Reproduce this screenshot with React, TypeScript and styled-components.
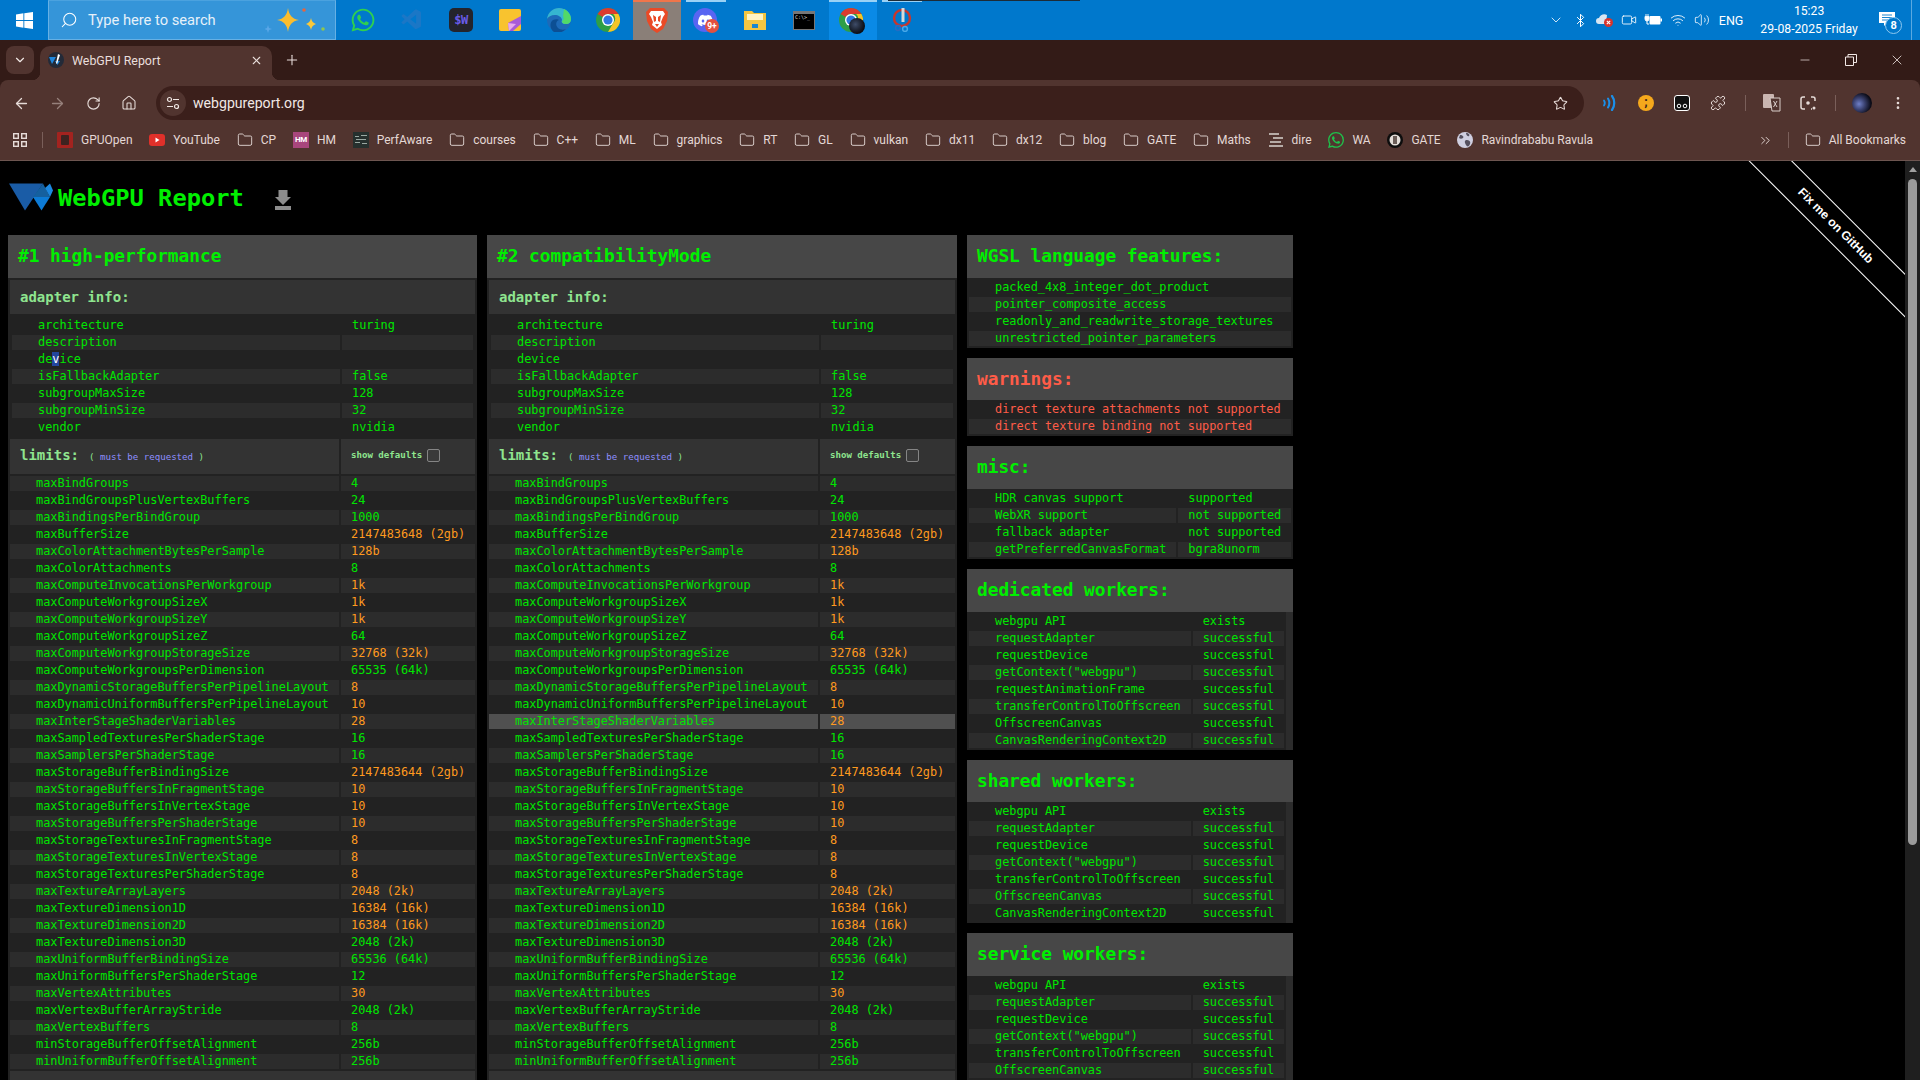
import React from 'react';
import styled, { createGlobalStyle } from 'styled-components';
import {
  ArrowLeft, ArrowRight, Bluetooth, ChevronDown, ChevronsRight, EllipsisVertical, Folder, House,
  Minus, Plus, Puzzle, RotateCw, Search, Star, Video, Volume2, Wifi, X,
} from 'lucide-react';
import { FaWhatsapp } from 'react-icons/fa';
import { SiDiscord, SiWhatsapp } from 'react-icons/si';
import { VscVscode } from 'react-icons/vsc';

const MONO = '"DejaVu Sans Mono", "Liberation Mono", monospace';
const UI = 'Roboto, "Noto Sans", sans-serif';

const Global = createGlobalStyle`
  html, body { margin: 0; padding: 0; background: #000; overflow: hidden; height: 1080px; }
  #root { height: 1080px; }
  * { box-sizing: border-box; }
`;

const Screen = styled.div`
  width: 1920px; height: 1080px; display: flex; flex-direction: column; overflow: hidden; background: #000;
`;

/* ---------- Windows taskbar ---------- */
const Taskbar = styled.div`
  position: relative; height: 40px; flex: none; display: flex; align-items: stretch; background: #0078cc;
  font-family: ${UI}; color: #fff;
`;
const StartButton = styled.div`
  width: 48px; display: flex; align-items: center; justify-content: center;
`;
const SearchBox = styled.div`
  width: 288px; display: flex; align-items: center; padding-left: 11px; background: #3595d9;
  border: 1px solid #66b0e4; border-top-color: #4ba2df; position: relative; color: #e6f1f9; font-size: 14.7px;
  svg.glass { margin-right: 10px; transform: scaleX(-1); }
`;
const Sparkles = styled.svg`
  position: absolute; right: 10px; top: 0;
`;
const TaskIcons = styled.div`
  display: flex; gap: 1px; margin-left: 3px;
`;
const TaskSlot = styled.div<{ $bg?: string; $accent?: string }>`
  position: relative; width: 48px; display: flex; align-items: center; justify-content: center;
  background: ${p => p.$bg || 'transparent'};
  &::before {
    content: ''; position: absolute; left: ${p => (p.$bg ? 0 : 4)}px; right: ${p => (p.$bg ? 0 : 4)}px; top: 0; height: 2px;
    background: ${p => p.$accent || 'transparent'};
  }
`;
const PreviewLine = styled.div`
  position: absolute; left: 888px; top: 0; width: 192px; height: 1px; background: #1d2b36;
`;
const SwBadge = styled.div`
  width: 24px; height: 24px; border-radius: 5px; background: #24242c; color: #6a5ce8;
  font: bold 12px ${MONO}; display: flex; align-items: center; justify-content: center; letter-spacing: -0.5px;
`;
const TermBox = styled.div`
  width: 22px; height: 19px; background: #000; border: 1px solid #777; border-top-width: 3px;
  color: #ddd; font: 5px/7px ${MONO}; padding: 0 1px; overflow: hidden;
`;
const DiscordDisc = styled.div`
  position: relative; width: 24px; height: 24px; border-radius: 50%; background: #5865f2;
  display: flex; align-items: center; justify-content: center; margin-left: -2px;
`;
const CountBadge = styled.div`
  position: absolute; left: 12px; top: 11px; width: 14px; height: 14px; border-radius: 50%; background: #e2503f;
  color: #fff; font: bold 8.5px/14px ${UI}; text-align: center;
`;
const ChromeStack = styled.div`
  position: relative; width: 24px; height: 24px; margin-left: -4px;
`;
const ProfileDot = styled.div`
  position: absolute; left: 10px; top: 10px; width: 16px; height: 16px; border-radius: 50%;
  background: radial-gradient(circle at 40% 40%, #3e4c68 0, #1c2230 45%, #050508 80%);
`;
const Tray = styled.div`
  margin-left: auto; display: flex; align-items: center; width: 376px;
`;
const TraySlot = styled.div`
  width: 24.3px; display: flex; align-items: center; justify-content: center; flex: none;
`;
const TrayLang = styled.div`
  width: 36px; text-align: center; font-size: 12.5px; margin-left: -1px; flex: none;
`;
const Clock = styled.div`
  width: 110px; margin-left: 5px; text-align: center; font-size: 12.2px; line-height: 18px; flex: none;
`;
const NotifySlot = styled.div`
  position: relative; width: 44px; height: 40px; flex: none; padding: 12px 0 0 15px;
`;
const NotifyBadge = styled.div`
  position: absolute; left: 21px; top: 17px; width: 17px; height: 17px; border-radius: 50%;
  border: 1px solid #8ec8ef; background: #0078cc; font: bold 11px/15px ${UI}; text-align: center;
`;
const TrayEdge = styled.div`
  width: 1px; height: 40px; background: #5aa9e0; margin-left: 3px; flex: none;
`;

/* ---------- Browser chrome ---------- */
const TabStrip = styled.div`
  height: 40px; flex: none; background: #331b17; display: flex; align-items: flex-end; padding-left: 6px;
  font-family: ${UI}; color: #e9dedb;
`;
const TabMenu = styled.div`
  width: 28px; height: 28px; margin-bottom: 6px; border-radius: 8px; background: #51342f;
  display: flex; align-items: center; justify-content: center;
`;
const Tab = styled.div`
  position: relative; width: 232px; height: 34px; margin-left: 6px; background: #51342f; border-radius: 10px 10px 0 0;
  display: flex; align-items: center; padding: 0 9px 6px 8px; font-size: 12.4px;
  &::before, &::after { content: ''; position: absolute; bottom: 0; width: 8px; height: 8px; }
  &::before { left: -8px; background: radial-gradient(circle at 0 0, transparent 8px, #51342f 8.5px); }
  &::after { right: -8px; background: radial-gradient(circle at 100% 0, transparent 8px, #51342f 8.5px); }
`;
const TabTitle = styled.span`
  flex: 1; margin-left: 8px;
`;
const NewTab = styled.div`
  margin: 0 0 12px 12px; width: 16px; height: 16px; display: flex;
`;
const WindowControls = styled.div`
  margin-left: auto; height: 40px; display: flex; align-items: center; padding-right: 0;
`;
const WinButton = styled.div`
  width: 46px; display: flex; align-items: center; justify-content: center;
`;
const ChromeBody = styled.div`
  flex: none; background: #331b17;
`;
const ChromePanel = styled.div`
  background: #51342f; border-radius: 8px 8px 0 0; border-bottom: 1px solid #6d5550; font-family: ${UI}; color: #e9dedb;
`;
const Toolbar = styled.div`
  height: 40px; padding: 6px 4px 0 3px; display: flex; align-items: stretch;
`;
const ToolSlot = styled.div`
  width: 36px; flex: none; display: flex; align-items: center; justify-content: center;
`;
const Omnibox = styled.div`
  flex: 1; margin: 0 8px 0 9px; border-radius: 17px; background: #3b1f1b; display: flex; align-items: center;
  padding: 0 16px 0 4px; font-size: 14.1px; color: #f1e8e5;
`;
const SiteChip = styled.div`
  width: 26px; height: 26px; border-radius: 50%; background: #51342f; display: flex; align-items: center; justify-content: center;
  margin-right: 7px;
`;
const UrlText = styled.span` flex: 1; `;
const ToolSep = styled.div`
  width: 18px; flex: none; display: flex; align-items: center; justify-content: center;
  &::before { content: ''; width: 1px; height: 16px; background: #7a5f5a; }
`;
const YellowDot = styled.div`
  width: 16px; height: 16px; border-radius: 50%; background: #f5a81c; color: #3b1f1b;
  font: bold 13px/14px ${UI}; text-align: center;
`;
const Avatar = styled.div`
  width: 20px; height: 20px; border-radius: 50%;
  background: radial-gradient(circle at 35% 55%, #7080c8 0, #39406e 35%, #0b0b16 70%);
`;
const Bookmarks = styled.div`
  height: 40px; padding: 0 14px 0 13px; display: flex; align-items: center; font-size: 12px; color: #e4d8d5;
`;
const AppsSep = styled.div`
  width: 1px; height: 16px; background: #7a5f5a; margin: 0 14px 0 15px; flex: none;
`;
const BookmarkList = styled.div`
  display: flex; align-items: center; gap: 16.8px;
`;
const Bookmark = styled.div`
  display: flex; align-items: center; gap: 8px; white-space: nowrap;
`;
const BookmarkEnd = styled.div`
  margin-left: auto; display: flex; align-items: center;
`;
const EndSep = styled.div`
  width: 1px; height: 16px; background: #7a5f5a; margin: 0 16px 0 15px;
`;
const HmIcon = styled.div`
  width: 16px; height: 16px; background: #a8467c; color: #fff; font: bold 8px/16px ${UI}; text-align: center; letter-spacing: -0.3px;
`;

/* ---------- Report page ---------- */
const Main = styled.div`
  position: relative; flex: 1; min-height: 0; display: flex; background: #000; overflow: hidden;
`;
const Page = styled.div`
  flex: 1; min-width: 0; padding-left: 8px; font-family: ${MONO};
`;
const TitleRow = styled.div`
  height: 74px; display: flex; align-items: flex-start; padding: 22px 0 0 1px;
`;
const TitleText = styled.h1`
  margin: 0 0 0 5px; color: #00f000; font: bold 23.75px/30px ${MONO};
`;
const DownloadIcon = styled.svg`
  margin: 7px 0 0 31px;
`;
const Columns = styled.div`
  display: flex; align-items: flex-start; gap: 10px;
`;
const AdapterColumn = styled.section<{ $w: number }>`
  width: ${p => p.$w}px; flex: none; background: #2c2c2c;
`;
const SideColumn = styled.div`
  width: 326px; flex: none; display: flex; flex-direction: column; gap: 10px;
`;
const SidePanel = styled.section`
  background: #2c2c2c;
`;
const PanelTitle = styled.h2<{ $warn?: boolean }>`
  margin: 0; height: 42.67px; padding: 0 10px; background: #474747; color: ${p => (p.$warn ? '#ff5c48' : '#00f000')};
  font: bold 17.8px/42px ${MONO};
`;
const Table = styled.table<{ $fill?: boolean; $fixed?: boolean }>`
  border-collapse: separate; border-spacing: 2px; background: #222;
  width: ${p => (p.$fill ? '100%' : 'auto')};
  table-layout: ${p => (p.$fixed ? 'fixed' : 'auto')};
  font: 11.87px/15px ${MONO};
`;
const Cell = styled.td<{ $stripe?: boolean; $hover?: boolean; $key?: boolean; $tone?: string }>`
  height: 15px; padding: 0 10px 0 ${p => (p.$key ? 26 : 10)}px; white-space: nowrap; overflow: hidden;
  background: ${p => (p.$hover ? '#505050' : p.$stripe ? '#2c2c2c' : 'transparent')};
  color: ${p => p.$tone || '#00e600'};
`;
const NestCell = styled.td`
  padding: 0;
`;
const SectionHead = styled.th`
  height: 34px; padding: 0 10px; background: #333; text-align: left; color: #8fe58f;
  font: bold 14px/34px ${MONO};
  white-space: nowrap;
`;
const LimitsHead = styled(SectionHead)`
  height: 35px; line-height: 20px; padding: 0 10px 2px;
`;
const RequestedNote = styled.span`
  margin-left: 10px; color: #8fe58f; font: 9.1px/12px ${MONO};
  b { color: #8f8fff; font-weight: 400; }
`;
const ShowDefaults = styled.label`
  display: flex; align-items: center; color: #8fe58f; font: bold 9.1px/14px ${MONO};
`;
const CheckBox = styled.span`
  width: 13px; height: 13px; margin-left: 5px; background: #3a3a3a; border: 1px solid #858585; border-radius: 2px;
`;
const Selected = styled.span`
  background: #23459c; color: #fff;
`;
const Ribbon = styled.div`
  position: absolute; left: 1700px; top: 0; width: 205px; height: 200px; overflow: hidden; pointer-events: none;
`;
const RibbonBand = styled.div`
  position: absolute; left: -66px; top: 48px; width: 400px; height: 31px; transform: rotate(45deg);
  border-top: 1px solid #fff; border-bottom: 1px solid #fff; background: #000; color: #fff; padding-left: 4px;
  font: bold 12.2px/29px "Liberation Sans", Arial, sans-serif; text-align: center;
`;
const ScrollTrack = styled.div`
  width: 15px; flex: none; background: #1f1f1f; display: flex; flex-direction: column; align-items: center; padding-top: 6px;
`;
const ScrollUp = styled.div`
  width: 0; height: 0; border-left: 4px solid transparent; border-right: 4px solid transparent; border-bottom: 5px solid #a0a0a0;
`;
const ScrollThumb = styled.div`
  width: 9px; height: 666px; margin-top: 7px; border-radius: 5px; background: #9b9b9b;
`;

/* ---------- Drawings ---------- */
const WinLogo = () => (
  <svg width="17" height="17" viewBox="0 0 17 17" fill="#fff">
    <path d="M0 2.4 7.4 1.3v6.7H0zM8.3 1.2 17 0v8H8.3zM0 9h7.4v6.7L0 14.6zM8.3 9H17v8l-8.7-1.2z" />
  </svg>
);
const ChromeLogo = ({ size = 24 }: { size?: number }) => (
  <svg width={size} height={size} viewBox="0 0 24 24">
    <circle cx="12" cy="12" r="12" fill="#2e9e47" />
    <path d="M12 0a12 12 0 0 1 10.4 6H12a6 6 0 0 0-5.2 3L1.6 6A12 12 0 0 1 12 0z" fill="#db3b2f" />
    <path d="M22.4 6A12 12 0 0 1 12 24l5.2-9a6 6 0 0 0 0-9z" fill="#f6c428" />
    <circle cx="12" cy="12" r="6" fill="#fff" />
    <circle cx="12" cy="12" r="4.6" fill="#2f78e4" />
  </svg>
);
const BraveLogo = () => (
  <svg width="24" height="26" viewBox="0 0 24 26">
    <path d="M5 1h14l4 4-1 9-4 8-6 4-6-4-4-8-1-9z" fill="#ea4a26" />
    <path d="M6 4h12l2 3-2 3-2 5 1 3-5 4-5-4 1-3-2-5-2-3z" fill="#fff" />
    <path d="M8 8l3 2v4l-2 1zM16 8l-3 2v4l2 1zM10 17h4l-2 3z" fill="#ea4a26" />
  </svg>
);
const EdgeLogo = () => (
  <svg width="24" height="24" viewBox="0 0 24 24">
    <circle cx="12" cy="12" r="12" fill="#1d6ab8" />
    <path d="M0 11C1 4 6 0 12 0c7 0 12 5 12 11 0 3-2 5-5 5-4 0-5-2-4-4 0-3-4-5-7-5-4 0-7 2-8 4z" fill="#35b5d0" />
    <path d="M17 1c4 2 7 6 7 10 0 3-2 5-5 5-3 0-4-1-4-3 2-1 2-3 1-5z" fill="#52d868" />
    <path d="M7 24c-4-3-5-9-1-12 2-1 5-1 6 0-3 1-4 5-1 8 2 2 6 2 8 1-3 3-8 5-12 3z" fill="#0c4f94" />
  </svg>
);
const StickyNote = () => (
  <svg width="22" height="22" viewBox="0 0 22 22">
    <rect width="22" height="22" rx="2" fill="#f8c32f" />
    <path d="M22 7v8l-8 7h-4l-1-8z" fill="#a85ad8" />
    <path d="M10 22l-1-8 8 1z" fill="#e6a9ef" />
  </svg>
);
const FilesIcon = () => (
  <svg width="22" height="20" viewBox="0 0 22 20">
    <path d="M0 1h8l2 2h12v17H0z" fill="#f4c542" />
    <rect x="3" y="4" width="16" height="6" fill="#fff3c4" />
    <rect x="8" y="14" width="6" height="4" fill="#1a86d0" />
  </svg>
);
const SnipIcon = () => (
  <svg width="20" height="24" viewBox="0 0 20 24" fill="none">
    <circle cx="10" cy="10" r="8" stroke="#c8362c" strokeWidth="2.4" />
    <path d="M11 0v14" stroke="#d8d8d8" strokeWidth="3" />
    <circle cx="6" cy="20" r="2.4" stroke="#2a6cc0" strokeWidth="1.5" />
    <circle cx="13" cy="21" r="2.4" stroke="#48a8e8" strokeWidth="1.5" />
  </svg>
);
const SparkleArt = () => (
  <Sparkles width="60" height="38" viewBox="0 0 60 38">
    <path d="M23 7c1 7 4 11 11 12-7 1-10 5-11 12-1-7-4-11-11-12 7-1 10-5 11-12z" fill="#fbbd2e" />
    <path d="M46 17c.5 3 2 5 5 6-3 1-4.500 3-5 6-.5-3-2-5-5-6 3-1 4.500-3 5-6z" fill="#fbc93a" />
    <path d="M3 24l1 3 3 1-3 1-1 3-1-3-3-1 3-1z" fill="#5aa7e8" />
    <circle cx="39" cy="9" r="1.800" fill="#e5653f" />
    <circle cx="58" cy="28" r="1.800" fill="#8fc64f" />
  </Sparkles>
);
const CloudX = () => (
  <svg width="18" height="16" viewBox="0 0 18 16">
    <path d="M3 12a3 3 0 0 1 0-6c1-3 5-5 8-3l-1 9z" fill="#d8e6f2" />
    <circle cx="12.500" cy="10.500" r="4.500" fill="#d8342c" />
    <path d="M10.800 8.800l3.400 3.400m0-3.400l-3.400 3.400" stroke="#fff" strokeWidth="1.100" />
  </svg>
);
const PowerBattery = () => (
  <svg width="18" height="12" viewBox="0 0 18 12" fill="#fff">
    <path d="M1 2.500h4v2.500a2 2 0 0 1-4 0zM2 0v2.500M4 0v2.500" stroke="#fff" strokeWidth=".9" />
    <path d="M3 7v3h2" stroke="#fff" fill="none" />
    <rect x="5.500" y="2" width="11" height="8.500" rx="1" />
    <rect x="16.500" y="4.500" width="1.500" height="3" />
  </svg>
);
const ChatIcon = () => (
  <svg width="17" height="17" viewBox="0 0 17 17" fill="#fff">
    <path d="M0 0h16v11H8l-3 3v-3H0z" />
    <path d="M3 3h10M3 5.500h10M3 8h7" stroke="#0078cc" strokeWidth=".9" />
  </svg>
);
const RestoreIcon = () => (
  <svg width="12" height="12" viewBox="0 0 12 12" fill="none" stroke="#f2e8e5">
    <path d="M.5 3h8v8.500h-8z" />
    <path d="M3 3V.5h8.500v8H9" />
  </svg>
);
const GlobeFavicon = ({ size = 16 }: { size?: number }) => (
  <svg width={size} height={size} viewBox="0 0 16 16">
    <circle cx="8" cy="8" r="8" fill="#cfcfe0" />
    <path d="M3 3c3 0 4 2 3 3S3 7 2 6zM9 8c3 0 5 1 4 4s-3 3-4 1-2-4 0-5zM9 1c3 0 4 2 3 3s-3-1-3-3z" fill="#55505e" />
  </svg>
);
const WebGpuFavicon = () => (
  <svg width="16" height="16" viewBox="0 0 16 16">
    <circle cx="8" cy="8" r="8" fill="#232a38" />
    <path d="M1 5h7l-4 7zM7 9h5l-2.500 4z" fill="#1f86dc" />
    <path d="M10 2l2 1-3 9-1-1z" fill="#fff" />
  </svg>
);
const SoundExt = () => (
  <svg width="16" height="16" viewBox="0 0 16 16" fill="none" stroke="#1b8fe8" strokeLinecap="round">
    <path d="M2 5.500c1 1.500 1 3.500 0 5" strokeWidth="1.800" />
    <path d="M6 3.500c1.800 3 1.800 6 0 9" strokeWidth="2" />
    <path d="M10 1c3 4 3 10 0 14" strokeWidth="2.200" />
  </svg>
);
const TapeExt = () => (
  <svg width="16" height="16" viewBox="0 0 16 16">
    <rect x=".5" y=".5" width="15" height="15" rx="2.500" fill="#111" stroke="#fff" />
    <circle cx="5" cy="11" r="1.800" fill="none" stroke="#fff" />
    <circle cx="11" cy="11" r="1.800" fill="none" stroke="#fff" />
  </svg>
);
const TranslateIcon = () => (
  <svg width="18" height="18" viewBox="0 0 18 18">
    <rect x="0" y="0" width="11" height="14" rx="1" fill="#c9b5b0" />
    <path d="M7 4h10v13H9z" fill="#51342f" stroke="#d9cdca" />
    <path d="M10.500 7l3.500 6m0-6l-3.500 6" stroke="#d9cdca" />
  </svg>
);
const LensIcon = () => (
  <svg width="16" height="16" viewBox="0 0 16 16" fill="none" stroke="#e6dbd8" strokeWidth="1.500">
    <path d="M5 2H3a2 2 0 0 0-2 2v8a2 2 0 0 0 2 2h2M11 2h2a2 2 0 0 1 2 2v2M11 14h1" />
    <circle cx="8" cy="8" r="1.800" fill="#e6dbd8" stroke="none" />
    <circle cx="14" cy="13" r="1.500" fill="#e6dbd8" stroke="none" />
  </svg>
);
const SiteTune = () => (
  <svg width="14" height="14" viewBox="0 0 14 14" fill="none" stroke="#f1e8e5" strokeWidth="1.200">
    <circle cx="3.500" cy="3.500" r="2" />
    <path d="M7 3.500h6M1 10.500h6" />
    <circle cx="10.500" cy="10.500" r="2" />
  </svg>
);
const AppsGrid = () => (
  <svg width="14" height="14" viewBox="0 0 14 14" fill="none" stroke="#e6dbd8" strokeWidth="1.400">
    <rect x=".7" y=".7" width="4.600" height="4.600" />
    <rect x="8.700" y=".7" width="4.600" height="4.600" />
    <rect x=".7" y="8.700" width="4.600" height="4.600" />
    <rect x="8.700" y="8.700" width="4.600" height="4.600" />
  </svg>
);
const GpuOpenIcon = () => (
  <svg width="16" height="16" viewBox="0 0 16 16">
    <rect width="16" height="16" rx="1" fill="#a3231f" />
    <rect x="4" y="3" width="8" height="10" rx="1" fill="#3d2320" />
  </svg>
);
const YouTubeIcon = () => (
  <svg width="16" height="12" viewBox="0 0 16 12">
    <rect width="16" height="12" rx="3" fill="#e0302a" />
    <path d="M6.500 3.500l4 2.500-4 2.500z" fill="#fff" />
  </svg>
);
const PerfIcon = () => (
  <svg width="16" height="16" viewBox="0 0 16 16">
    <rect width="16" height="16" fill="#26302e" />
    <path d="M2 4h4v1H2zM8 3h6v1H8zM3 7h10v1H3zM2 10h5v1H2zM9 11h5v1H9z" fill="#9aa8a2" />
  </svg>
);
const DireIcon = () => (
  <svg width="16" height="16" viewBox="0 0 16 16" stroke="#d8d2ce" fill="none" strokeWidth="1.600">
    <path d="M1 2h10M5 6h10M2 10h11M1 14h14" />
  </svg>
);
const GateIcon = () => (
  <svg width="16" height="16" viewBox="0 0 16 16">
    <circle cx="8" cy="8" r="8" fill="#0d0d0d" />
    <circle cx="8" cy="8" r="5.500" fill="#e3ddd8" />
    <path d="M6 4h4v8H6z" fill="#6a5d58" />
  </svg>
);
const WaBookmark = () => <SiWhatsapp size={16} color="#1fc14b" />;
const FolderIcon = () => <Folder size={16} strokeWidth={1.400} color="#e0d5d2" />;
const WebGpuLogo = () => (
  <svg width="44" height="28" viewBox="0 0 44 28">
    <path d="M0 .5h34L16 27.500z" fill="#1a5ca6" />
    <path d="M24 14 34 .5l7 13.500z" fill="#15609f" />
    <path d="M24 14h17l-8.500 13.500z" fill="#0d7bd6" />
    <path d="M36 5l5-4.500 3 7-3 6.500z" fill="#1d88e0" />
  </svg>
);

/* ---------- Data ---------- */
const TASK = [
  <FaWhatsapp key="w" size={26} color="#2fd04f" />,
  <VscVscode key="v" size={24} color="#1b77c6" />,
  <SwBadge key="s">$W</SwBadge>,
  <StickyNote key="n" />,
  <EdgeLogo key="e" />,
  <ChromeLogo key="c" />,
];
const BOOKMARKS: [React.ReactNode, string][] = [
  [<GpuOpenIcon />, 'GPUOpen'],
  [<YouTubeIcon />, 'YouTube'],
  [<FolderIcon />, 'CP'],
  [<HmIcon>HM</HmIcon>, 'HM'],
  [<PerfIcon />, 'PerfAware'],
  [<FolderIcon />, 'courses'],
  [<FolderIcon />, 'C++'],
  [<FolderIcon />, 'ML'],
  [<FolderIcon />, 'graphics'],
  [<FolderIcon />, 'RT'],
  [<FolderIcon />, 'GL'],
  [<FolderIcon />, 'vulkan'],
  [<FolderIcon />, 'dx11'],
  [<FolderIcon />, 'dx12'],
  [<FolderIcon />, 'blog'],
  [<FolderIcon />, 'GATE'],
  [<FolderIcon />, 'Maths'],
  [<DireIcon />, 'dire'],
  [<WaBookmark />, 'WA'],
  [<GateIcon />, 'GATE'],
  [<GlobeFavicon />, 'Ravindrababu Ravula'],
];
const ADAPTER: [string, string][] = [
  ['architecture', 'turing'], ['description', ''], ['device', ''], ['isFallbackAdapter', 'false'],
  ['subgroupMaxSize', '128'], ['subgroupMinSize', '32'], ['vendor', 'nvidia'],
];
/* name, value, differs from the spec default */
const LIMITS: [string, string, boolean][] = [
  ['maxBindGroups', '4', false],
  ['maxBindGroupsPlusVertexBuffers', '24', false],
  ['maxBindingsPerBindGroup', '1000', false],
  ['maxBufferSize', '2147483648 (2gb)', true],
  ['maxColorAttachmentBytesPerSample', '128b', true],
  ['maxColorAttachments', '8', false],
  ['maxComputeInvocationsPerWorkgroup', '1k', true],
  ['maxComputeWorkgroupSizeX', '1k', true],
  ['maxComputeWorkgroupSizeY', '1k', true],
  ['maxComputeWorkgroupSizeZ', '64', false],
  ['maxComputeWorkgroupStorageSize', '32768 (32k)', true],
  ['maxComputeWorkgroupsPerDimension', '65535 (64k)', false],
  ['maxDynamicStorageBuffersPerPipelineLayout', '8', true],
  ['maxDynamicUniformBuffersPerPipelineLayout', '10', true],
  ['maxInterStageShaderVariables', '28', true],
  ['maxSampledTexturesPerShaderStage', '16', false],
  ['maxSamplersPerShaderStage', '16', false],
  ['maxStorageBufferBindingSize', '2147483644 (2gb)', true],
  ['maxStorageBuffersInFragmentStage', '10', true],
  ['maxStorageBuffersInVertexStage', '10', true],
  ['maxStorageBuffersPerShaderStage', '10', true],
  ['maxStorageTexturesInFragmentStage', '8', true],
  ['maxStorageTexturesInVertexStage', '8', true],
  ['maxStorageTexturesPerShaderStage', '8', true],
  ['maxTextureArrayLayers', '2048 (2k)', true],
  ['maxTextureDimension1D', '16384 (16k)', true],
  ['maxTextureDimension2D', '16384 (16k)', true],
  ['maxTextureDimension3D', '2048 (2k)', false],
  ['maxUniformBufferBindingSize', '65536 (64k)', false],
  ['maxUniformBuffersPerShaderStage', '12', false],
  ['maxVertexAttributes', '30', true],
  ['maxVertexBufferArrayStride', '2048 (2k)', false],
  ['maxVertexBuffers', '8', false],
  ['minStorageBufferOffsetAlignment', '256b', false],
  ['minUniformBufferOffsetAlignment', '256b', false],
];
const WGSL = ['packed_4x8_integer_dot_product', 'pointer_composite_access', 'readonly_and_readwrite_storage_textures', 'unrestricted_pointer_parameters'];
const WARNINGS = ['direct texture attachments not supported', 'direct texture binding not supported'];
const MISC: [string, string][] = [
  ['HDR canvas support', 'supported'], ['WebXR support', 'not supported'],
  ['fallback adapter', 'not supported'], ['getPreferredCanvasFormat', 'bgra8unorm'],
];
const workerRows = (withRaf: boolean): [string, string][] => [
  ['webgpu API', 'exists'],
  ['requestAdapter', 'successful'],
  ['requestDevice', 'successful'],
  ['getContext("webgpu")', 'successful'],
  ...(withRaf ? ([['requestAnimationFrame', 'successful']] as [string, string][]) : []),
  ['transferControlToOffscreen', 'successful'],
  ['OffscreenCanvas', 'successful'],
  ['CanvasRenderingContext2D', 'successful'],
];
const ORANGE = '#ff9a1f';
const RED = '#ff5c48';

const AdapterPanel = ({ title, width, split, hoverRow, selectDevice }: {
  title: string; width: number; split: number; hoverRow?: number; selectDevice?: boolean;
}) => (
  <AdapterColumn $w={width}>
    <PanelTitle>{title}</PanelTitle>
    <Table $fill $fixed>
      <colgroup><col style={{ width: split }} /><col /></colgroup>
      <tbody>
        <tr><SectionHead colSpan={2}>adapter info:</SectionHead></tr>
        <tr>
          <NestCell colSpan={2}>
            <Table $fill $fixed>
              <colgroup><col style={{ width: 328 }} /><col /></colgroup>
              <tbody>
                {ADAPTER.map(([k, v], i) => (
                  <tr key={k}>
                    <Cell $key $stripe={i % 2 === 1}>
                      {selectDevice && k === 'device' ? <>de<Selected>v</Selected>ice</> : k}
                    </Cell>
                    <Cell $stripe={i % 2 === 1}>{v}</Cell>
                  </tr>
                ))}
              </tbody>
            </Table>
          </NestCell>
        </tr>
        <tr>
          <LimitsHead>limits:<RequestedNote>( <b>must be requested</b> )</RequestedNote></LimitsHead>
          <LimitsHead><ShowDefaults>show defaults<CheckBox /></ShowDefaults></LimitsHead>
        </tr>
        {LIMITS.map(([k, v, diff], i) => (
          <tr key={k}>
            <Cell $key $stripe={i % 2 === 0} $hover={hoverRow === i}>{k}</Cell>
            <Cell $stripe={i % 2 === 0} $hover={hoverRow === i} $tone={diff ? ORANGE : undefined}>{v}</Cell>
          </tr>
        ))}
        <tr><SectionHead colSpan={2} /></tr>
      </tbody>
    </Table>
  </AdapterColumn>
);

const ListPanel = ({ title, items, warn }: { title: string; items: string[]; warn?: boolean }) => (
  <SidePanel>
    <PanelTitle $warn={warn}>{title}</PanelTitle>
    <Table $fill>
      <tbody>
        {items.map((t, i) => (
          <tr key={t}><Cell $key $stripe={i % 2 === 1} $tone={warn ? RED : undefined}>{t}</Cell></tr>
        ))}
      </tbody>
    </Table>
  </SidePanel>
);

const PairPanel = ({ title, rows, fill }: { title: string; rows: [string, string][]; fill?: boolean }) => (
  <SidePanel>
    <PanelTitle>{title}</PanelTitle>
    <Table $fill={fill}>
      <tbody>
        {rows.map(([k, v], i) => (
          <tr key={k}>
            <Cell $key $stripe={i % 2 === 1}>{k}</Cell>
            <Cell $stripe={i % 2 === 1}>{v}</Cell>
          </tr>
        ))}
      </tbody>
    </Table>
  </SidePanel>
);

export default function App() {
  return (
    <Screen>
      <Global />
      <Taskbar>
        <StartButton><WinLogo /></StartButton>
        <SearchBox>
          <Search className="glass" size={18} strokeWidth={1.400} color="#fff" />
          Type here to search
          <SparkleArt />
        </SearchBox>
        <TaskIcons>
          {TASK.map((icon, i) => <TaskSlot key={i}>{icon}</TaskSlot>)}
          <TaskSlot $bg="#8a7f78" $accent="#f0754a"><BraveLogo /></TaskSlot>
          <TaskSlot $accent="#99d1f5">
            <DiscordDisc>
              <SiDiscord size={15} color="#fff" />
              <CountBadge>9+</CountBadge>
            </DiscordDisc>
          </TaskSlot>
          <TaskSlot><FilesIcon /></TaskSlot>
          <TaskSlot><TermBox>C:\&gt;_</TermBox></TaskSlot>
          <TaskSlot $bg="#0a8ae6" $accent="#99d1f5">
            <ChromeStack>
              <ChromeLogo />
              <ProfileDot />
            </ChromeStack>
          </TaskSlot>
          <TaskSlot $accent="#99d1f5"><SnipIcon /></TaskSlot>
        </TaskIcons>
        <PreviewLine />
        <Tray>
          <TraySlot><ChevronDown size={16} strokeWidth={1.200} /></TraySlot>
          <TraySlot><Bluetooth size={15} strokeWidth={1.600} /></TraySlot>
          <TraySlot><CloudX /></TraySlot>
          <TraySlot><Video size={16} strokeWidth={1.300} /></TraySlot>
          <TraySlot><PowerBattery /></TraySlot>
          <TraySlot><Wifi size={16} strokeWidth={1.300} /></TraySlot>
          <TraySlot><Volume2 size={16} strokeWidth={1.200} /></TraySlot>
          <TrayLang>ENG</TrayLang>
          <Clock>15:23<br />29-08-2025 Friday</Clock>
          <NotifySlot>
            <ChatIcon />
            <NotifyBadge>8</NotifyBadge>
          </NotifySlot>
          <TrayEdge />
        </Tray>
      </Taskbar>

      <TabStrip>
        <TabMenu><ChevronDown size={14} color="#f1e8e5" /></TabMenu>
        <Tab>
          <WebGpuFavicon />
          <TabTitle>WebGPU Report</TabTitle>
          <X size={13} color="#e9dedb" strokeWidth={2} />
        </Tab>
        <NewTab><Plus size={16} color="#e9dedb" strokeWidth={1.600} /></NewTab>
        <WindowControls>
          <WinButton><Minus size={14} color="#f2e8e5" strokeWidth={1.200} /></WinButton>
          <WinButton><RestoreIcon /></WinButton>
          <WinButton><X size={16} color="#f2e8e5" strokeWidth={1.200} /></WinButton>
        </WindowControls>
      </TabStrip>

      <ChromeBody>
        <ChromePanel>
          <Toolbar>
            <ToolSlot><ArrowLeft size={17} color="#e6dbd8" strokeWidth={1.800} /></ToolSlot>
            <ToolSlot><ArrowRight size={17} color="#96807b" strokeWidth={1.800} /></ToolSlot>
            <ToolSlot><RotateCw size={15} color="#e6dbd8" strokeWidth={1.800} /></ToolSlot>
            <ToolSlot><House size={16} color="#e6dbd8" strokeWidth={1.600} /></ToolSlot>
            <Omnibox>
              <SiteChip><SiteTune /></SiteChip>
              <UrlText>webgpureport.org</UrlText>
              <Star size={15} color="#e6dbd8" strokeWidth={1.700} />
            </Omnibox>
            <ToolSlot><SoundExt /></ToolSlot>
            <ToolSlot><YellowDot>;</YellowDot></ToolSlot>
            <ToolSlot><TapeExt /></ToolSlot>
            <ToolSlot><Puzzle size={16} color="#e6dbd8" strokeWidth={1.500} /></ToolSlot>
            <ToolSep />
            <ToolSlot><TranslateIcon /></ToolSlot>
            <ToolSlot><LensIcon /></ToolSlot>
            <ToolSep />
            <ToolSlot><Avatar /></ToolSlot>
            <ToolSlot><EllipsisVertical size={16} color="#e6dbd8" strokeWidth={2} /></ToolSlot>
          </Toolbar>
          <Bookmarks>
            <AppsGrid />
            <AppsSep />
            <BookmarkList>
              {BOOKMARKS.map(([icon, label], i) => (
                <Bookmark key={i}>{icon}<span>{label}</span></Bookmark>
              ))}
            </BookmarkList>
            <BookmarkEnd>
              <ChevronsRight size={15} color="#e6dbd8" strokeWidth={1.500} />
              <EndSep />
              <Bookmark><FolderIcon /><span>All Bookmarks</span></Bookmark>
            </BookmarkEnd>
          </Bookmarks>
        </ChromePanel>
      </ChromeBody>

      <Main>
        <Page>
          <TitleRow>
            <WebGpuLogo />
            <TitleText>WebGPU Report</TitleText>
            <DownloadIcon width="16" height="20" viewBox="0 0 16 20" fill="#8d8d8d">
              <path d="M3.500 0h9v7H16l-8 8-8-8h3.500zM0 16h16v4H0z" />
            </DownloadIcon>
          </TitleRow>
          <Columns>
            <AdapterPanel title="#1 high-performance" width={469} split={329} selectDevice />
            <AdapterPanel title="#2 compatibilityMode" width={470} split={329} hoverRow={14} />
            <SideColumn>
              <ListPanel title="WGSL language features:" items={WGSL} />
              <ListPanel title="warnings:" items={WARNINGS} warn />
              <PairPanel title="misc:" rows={MISC} fill />
              <PairPanel title="dedicated workers:" rows={workerRows(true)} />
              <PairPanel title="shared workers:" rows={workerRows(false)} />
              <PairPanel title="service workers:" rows={workerRows(false).slice(0, 6)} />
            </SideColumn>
          </Columns>
        </Page>
        <Ribbon><RibbonBand>Fix me on GitHub</RibbonBand></Ribbon>
        <ScrollTrack>
          <ScrollUp />
          <ScrollThumb />
        </ScrollTrack>
      </Main>
    </Screen>
  );
}
